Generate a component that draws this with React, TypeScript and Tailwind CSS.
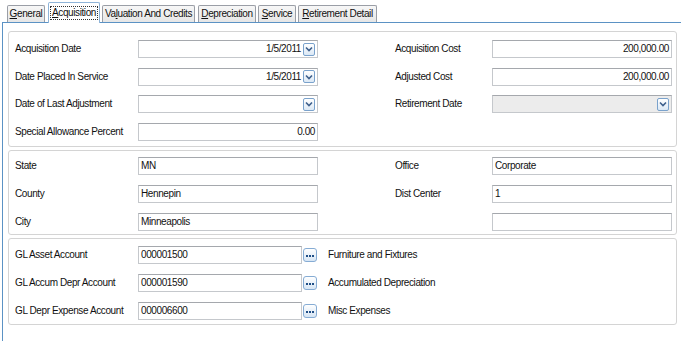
import React from 'react'

const font = { fontFamily: '"Liberation Sans", Arial, sans-serif' }

type TabProps = { label: string; u: number; active?: boolean; width: string; ml: string }

// underline the accelerator letter at index u
const Accel = ({ label, u }: { label: string; u: number }) => (
  <>
    {label.slice(0, u)}
    <span className='underline underline-offset-1'>{label[u]}</span>
    {label.slice(u + 1)}
  </>
)

const Tab: React.FC<TabProps> = ({ label, u, active, width, ml }) => {
  if (active) {
    return (
      <div className={`${width} ${ml} h-[21px] -mb-px relative z-10 bg-white border border-b-0 border-[#8fb4d8] rounded-t-[2px] flex items-center justify-center whitespace-nowrap`}>
        <span className='border border-dotted border-[#333] px-px pb-px leading-[11px]'>
          <Accel label={label} u={u} />
        </span>
      </div>
    )
  }
  return (
    <div className={`${width} ${ml} h-[17px] border border-b-0 border-[#9a9ea6] rounded-t-[2px] bg-gradient-to-b from-[#f7f7f7] to-[#e6e6e6] flex items-center justify-center whitespace-nowrap`}>
      <Accel label={label} u={u} />
    </div>
  )
}

const DropButton = () => (
  <div className='w-[12px] h-[13px] mr-[2px] border border-[#7aa2cc] rounded-[2px] bg-gradient-to-b from-[#ffffff] to-[#dbe8f5] flex items-center justify-center'>
    <svg width='8' height='6' viewBox='0 0 8 6'>
      <path d='M1 1.5 L4 4.5 L7 1.5' fill='none' stroke='#3d5f8c' strokeWidth='1.6' />
    </svg>
  </div>
)

const EllipsisButton = () => (
  <div className='w-[14px] h-[14px] border border-[#86acd4] rounded-[3px] bg-gradient-to-b from-[#ffffff] to-[#d6e5f4] flex items-end justify-center pb-[4px]'>
    <div className='flex gap-[1px]'>
      <span className='w-[2px] h-[2px] bg-[#1f4e86]' />
      <span className='w-[2px] h-[2px] bg-[#1f4e86]' />
      <span className='w-[2px] h-[2px] bg-[#1f4e86]' />
    </div>
  </div>
)

type FieldProps = {
  value?: string
  align?: 'left' | 'right'
  drop?: boolean
  disabled?: boolean
}

const Field: React.FC<FieldProps> = ({ value = '', align = 'left', drop, disabled }) => (
  <div className={`h-[18px] border border-[#c5c8cc] border-t-[#a5a8ad] flex items-center ${disabled ? 'bg-[#ececec]' : 'bg-white'}`}>
    <span className={`flex-1 px-[2px] ${align === 'right' ? 'text-right' : 'text-left'} text-[#111]`}>{value}</span>
    {drop && <DropButton />}
  </div>
)

const Label = ({ children }: { children?: React.ReactNode }) => (
  <div className='h-[18px] flex items-center text-[#111] whitespace-nowrap'>{children}</div>
)

const GroupBox = ({ children, className }: { children: React.ReactNode; className: string }) => (
  <div className={`border border-[#d4d4d4] rounded-[3px] pl-[6px] ${className}`}>{children}</div>
)

const AccountRow = ({ label, account, desc }: { label: string; account: string; desc: string }) => (
  <div className='flex items-center h-[18px] whitespace-nowrap'>
    <div className='w-[123px] text-[#111]'>{label}</div>
    <div className='w-[164px] h-[18px] border border-[#c5c8cc] border-t-[#a5a8ad] flex items-center px-[2px] text-[#111]'>{account}</div>
    <div className='ml-[1px]'><EllipsisButton /></div>
    <div className='ml-[11px] text-[#111]'>{desc}</div>
  </div>
)

export default function App() {
  return (
    <div className='w-[681px] h-[341px] bg-white text-[10px] tracking-[-0.4px] leading-none overflow-hidden' style={font}>
      {/* tab strip */}
      <div className='flex items-end h-[22px] pl-[7px] text-[#111]'>
        <Tab label='General' u={0} width='w-[38px]' ml='ml-0' />
        <Tab label='Acquisition' u={0} active width='w-[52px]' ml='ml-[3px]' />
        <Tab label='Valuation And Credits' u={2} width='w-[93px]' ml='ml-[2px]' />
        <Tab label='Depreciation' u={0} width='w-[58px]' ml='ml-[3px]' />
        <Tab label='Service' u={0} width='w-[38px]' ml='ml-[2px]' />
        <Tab label='Retirement Detail' u={0} width='w-[79px]' ml='ml-[2px]' />
      </div>

      {/* tab page */}
      <div className='ml-[2px] border-l border-t border-[#5b92c4] h-[319px] pt-[8px] pl-[5px] pr-[4px] flex flex-col gap-[3px]'>
        <GroupBox className='pt-[8px] pb-[5px]'>
          <div className='grid grid-cols-[123px_180px_77px_97px_180px] gap-y-[9.5px]'>
            <Label>Acquisition Date</Label>
            <Field value='1/5/2011' align='right' drop />
            <div />
            <Label>Acquisition Cost</Label>
            <Field value='200,000.00' align='right' />

            <Label>Date Placed In Service</Label>
            <Field value='1/5/2011' align='right' drop />
            <div />
            <Label>Adjusted Cost</Label>
            <Field value='200,000.00' align='right' />

            <Label>Date of Last Adjustment</Label>
            <Field drop />
            <div />
            <Label>Retirement Date</Label>
            <Field drop disabled />

            <Label>Special Allowance Percent</Label>
            <Field value='0.00' align='right' />
            <div />
            <div />
            <div />
          </div>
        </GroupBox>

        <GroupBox className='pt-[6px] pb-[3px]'>
          <div className='grid grid-cols-[123px_180px_77px_97px_180px] gap-y-[10px]'>
            <Label>State</Label>
            <Field value='MN' />
            <div />
            <Label>Office</Label>
            <Field value='Corporate' />

            <Label>County</Label>
            <Field value='Hennepin' />
            <div />
            <Label>Dist Center</Label>
            <Field value='1' />

            <Label>City</Label>
            <Field value='Minneapolis' />
            <div />
            <Label />
            <Field />
          </div>
        </GroupBox>

        <GroupBox className='pt-[7px] pb-[4px] flex flex-col gap-[10px]'>
          <AccountRow label='GL Asset Account' account='000001500' desc='Furniture and Fixtures' />
          <AccountRow label='GL Accum Depr Account' account='000001590' desc='Accumulated Depreciation' />
          <AccountRow label='GL Depr Expense Account' account='000006600' desc='Misc Expenses' />
        </GroupBox>
      </div>
    </div>
  )
}
